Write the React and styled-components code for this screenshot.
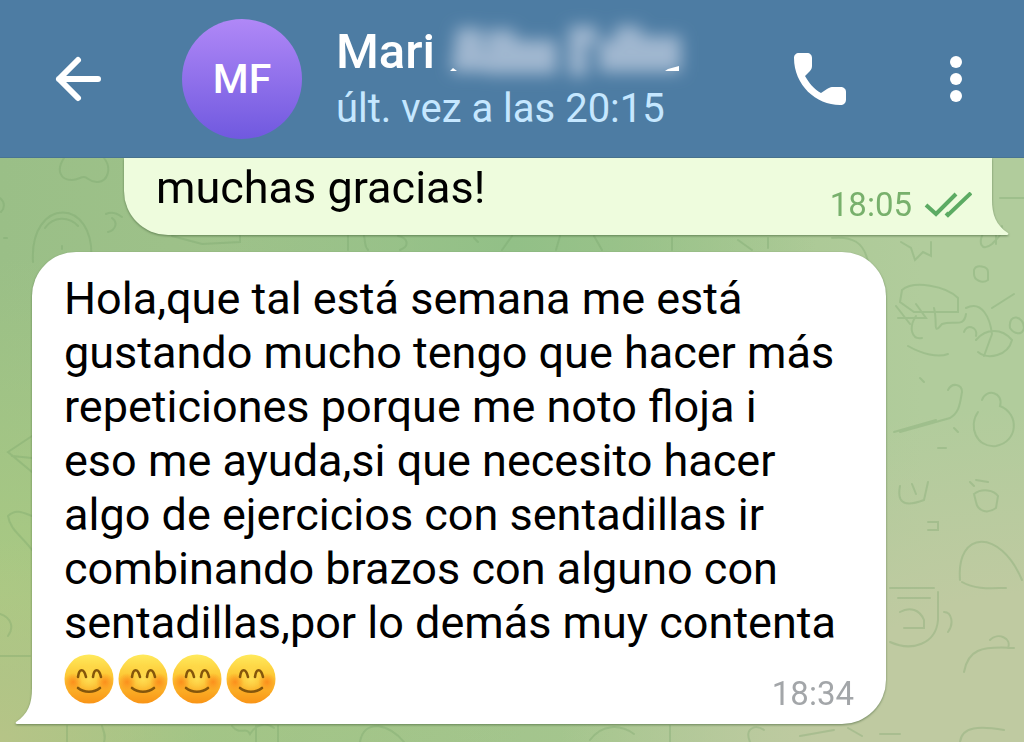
import React from 'react';
import styled, { createGlobalStyle } from 'styled-components';

const GlobalStyle = createGlobalStyle`
  *, *::before, *::after {
    box-sizing: border-box;
  }

  body {
    margin: 0;
    background-color: #aecb99;
    font-family: Roboto, 'Liberation Sans', sans-serif;
  }
`;

const Screen = styled.div`
  position: relative;
  display: flex;
  flex-direction: column;
  min-height: 100vh;
  overflow: hidden;
`;

const Wallpaper = styled.div`
  position: absolute;
  inset: 0;
  z-index: -1;
  background:
    radial-gradient(circle at 0% 100%, #b6c487 0, #b6c48700 16%),
    radial-gradient(ellipse at 100% 100%, #bfcaa1 0, #bfcaa1 14%, #bfcaa100 32%),
    radial-gradient(ellipse at 50% 33%, #92c087 0, #92c08700 42%),
    radial-gradient(ellipse at 0% 80%, #a9c983 0, #a9c98300 40%),
    linear-gradient(90deg, #9abf87, #a5c68e 60%, #b1cc9c 90%);

  svg {
    display: block;
    width: 100%;
    height: 100%;
  }
`;

const Header = styled.header`
  display: flex;
  align-items: center;
  padding: 0 36px 0 46px;
  height: 158px;
  background-color: #4d7ca3;
  border-bottom: 1px solid #487493;
`;

const IconButton = styled.button`
  display: flex;
  align-items: center;
  justify-content: center;
  flex: none;
  width: 64px;
  height: 64px;
  padding: 0;
  border: none;
  background: none;
  color: #fff;
  cursor: pointer;
`;

const Avatar = styled.div`
  display: flex;
  align-items: center;
  justify-content: center;
  flex: none;
  width: 120px;
  height: 120px;
  margin: 0 34px 0 72px;
  border-radius: 50%;
  background: linear-gradient(#b088f7, #7059df);
  color: #fff;
  font-size: 41px;
  font-weight: 500;
`;

const Contact = styled.div`
  flex: 1;
  min-width: 0;
`;

const Name = styled.h1`
  display: flex;
  align-items: center;
  gap: 8px;
  margin: 0;
  color: #fff;
  font-size: 49px;
  font-weight: 500;
  line-height: 60px;

  svg {
    overflow: visible;
  }
`;

const Status = styled.p`
  margin: 0;
  color: #c5e7ff;
  font-size: 40px;
  line-height: 54px;
  white-space: nowrap;
`;

const Actions = styled.div`
  display: flex;
  gap: 72px;
`;

const Messages = styled.main`
  display: flex;
  flex: 1;
  flex-direction: column;
  gap: 17px;
  padding: 0 32px 18px;
`;

const Bubble = styled.article`
  position: relative;
  display: flex;
  flex-direction: ${({ $outgoing }) => ($outgoing ? 'row' : 'column')};
  align-items: ${({ $outgoing }) => ($outgoing ? 'flex-end' : 'stretch')};
  justify-content: space-between;
  margin: ${({ $outgoing }) => ($outgoing ? '0 0 0 92px' : '0 106px 0 0')};
  padding: ${({ $outgoing }) => ($outgoing ? '3px 20px 12px 32px' : '20px 32px 12px')};
  border-radius: ${({ $outgoing }) => ($outgoing ? '0 0 0 44px' : '44px 44px 44px 0')};
  background-color: ${({ $outgoing }) => ($outgoing ? '#eefcdd' : '#fff')};
  filter: drop-shadow(0 1px 1px rgba(60, 90, 50, 0.6));
`;

const Tail = styled.svg`
  position: absolute;
  bottom: 0;
  ${({ $outgoing }) => ($outgoing ? 'left: 100%' : 'right: 100%')};
  width: 17px;
  height: 36px;
  fill: ${({ $outgoing }) => ($outgoing ? '#eefcdd' : '#fff')};
`;

const Text = styled.p`
  margin: 0;
  padding-bottom: ${({ $outgoing }) => ($outgoing ? '8px' : '0')};
  color: #000;
  font-size: 45px;
  line-height: 54px;
  white-space: nowrap;
`;

const Line = styled.span`
  display: block;
`;

const BubbleFooter = styled.div`
  display: flex;
  align-items: flex-end;
  justify-content: space-between;
  height: 62px;
`;

const Emojis = styled.div`
  display: flex;
  align-self: flex-start;
  gap: 4px;
  padding-top: 4px;
`;

const Meta = styled.div`
  display: flex;
  align-items: center;
  gap: 12px;
  color: ${({ $outgoing }) => ($outgoing ? '#78b06c' : '#a3a6a9')};
  font-size: 33px;
  line-height: 36px;
`;

const lines = [
  'Hola,que tal está semana me está',
  'gustando mucho tengo que hacer más',
  'repeticiones porque me noto floja i',
  'eso me ayuda,si que necesito hacer',
  'algo de ejercicios con sentadillas ir',
  'combinando brazos con alguno con',
  'sentadillas,por lo demás muy contenta',
];

const BackIcon = () => (
  <svg width="48" height="48" viewBox="0 0 48 48" fill="none" stroke="currentColor" strokeWidth="6" strokeLinecap="round" strokeLinejoin="round" aria-hidden="true">
    <path d="M44 24H5M24 5 5 24l19 19" />
  </svg>
);

const PhoneIcon = () => (
  <svg width="52" height="52" viewBox="0 0 52 52" fill="currentColor" aria-hidden="true">
    <path d="M5 0h8c3 0 5 2 5 5v8c0 2-1 4-2 5l-5 5c4 7 9 13 16 17l6-4c2-1 3-2 5-2h8c4 0 6 2 6 5v7c0 4-2 6-6 6C22 52 0 32 0 5c0-3 2-5 5-5z" />
  </svg>
);

const MenuIcon = () => (
  <svg width="14" height="48" viewBox="0 0 14 48" fill="currentColor" aria-hidden="true">
    <circle cx="7" cy="7" r="6" />
    <circle cx="7" cy="24" r="6" />
    <circle cx="7" cy="41" r="6" />
  </svg>
);

const ReadIcon = () => (
  <svg width="48" height="26" viewBox="0 0 48 26" fill="none" stroke="#5cab63" strokeWidth="4" role="img" aria-label="Leído">
    <path d="M2 13l10 9L32 2M22 21l2 2L47 1" />
  </svg>
);

const HiddenName = () => (
  <svg width="244" height="60" viewBox="0 0 244 60" aria-hidden="true">
    <defs>
      <filter id="smear" x="-20%" y="-60%" width="140%" height="220%">
        <feGaussianBlur stdDeviation="8" />
      </filter>
    </defs>
    <g fill="#c3d0e2" fillOpacity="0.7" filter="url(#smear)">
      <path d="M8 50 14 6h24l8 44z" />
      <path d="M44 8h28v10h42v34H44z" />
      <path d="M126 4h28v18h-10v32h-18z" />
      <path d="M156 18h16V4h26v10h40v36h-82z" />
    </g>
    <path d="M7 49l3-3 4 3zM222 49l3-2 11-3v5z" fill="#fff" />
  </svg>
);

const SmileEmoji = () => (
  <svg width="50" height="50" viewBox="0 0 50 50" role="img" aria-label="cara sonriente">
    <defs>
      <linearGradient id="face" x1="0" y1="0" x2="0" y2="1">
        <stop offset="0" stopColor="#ffea5c" />
        <stop offset="0.4" stopColor="#fdcb38" />
        <stop offset="1" stopColor="#f99416" />
      </linearGradient>
      <radialGradient id="cheek">
        <stop offset="0" stopColor="#fb8418" stopOpacity="0.8" />
        <stop offset="1" stopColor="#fb8418" stopOpacity="0" />
      </radialGradient>
      <radialGradient id="glow">
        <stop offset="0" stopColor="#ffe257" stopOpacity="0.9" />
        <stop offset="1" stopColor="#ffe257" stopOpacity="0" />
      </radialGradient>
    </defs>
    <circle cx="25" cy="25" r="24.5" fill="url(#face)" />
    <ellipse cx="25" cy="25" rx="14" ry="14" fill="url(#glow)" />
    <circle cx="9" cy="28" r="9" fill="url(#cheek)" />
    <circle cx="41" cy="28" r="9" fill="url(#cheek)" />
    <g fill="none" stroke="#84560c" strokeWidth="2.6" strokeLinecap="round" strokeLinejoin="round">
      <path d="M14 23c1-9 6-9 8 0M29 23c1-9 6-9 8 0" />
      <path d="M14 34c6 5 16 5 22 0" />
    </g>
  </svg>
);

const Doodles = () => (
  <svg viewBox="0 0 1024 742" preserveAspectRatio="xMidYMin slice" fill="none" stroke="#6f9e66" strokeOpacity="0.28" strokeWidth="2" strokeLinecap="round" aria-hidden="true">
    <path d="M64 158c-8 12-4 22 8 22 6 0 8-3 12-3s6 6 14 5c10-1 14-14 6-24M33 262c-4-66 64-66 58 0M45 228c8-12 24-12 33-2M106 214c6-3 12 0 16 3M108 232c8-2 10-10 4-14M0 198c5 4 5 10 1 14M4 238h3M62 246v3M172 236l30 8 38-2v-6" />
    <path d="M348 250v-14M364 236c2 8 0 10 4 14M398 236c10 2 12 10 2 14M474 238l4 4M502 250l10-14M556 250l4-14M594 236l8 14M672 238v12M738 240l14 10M768 238v10M832 238c20-2 32 4 36 24" />
    <path d="M32 436 8 452l24 20M12 456l20 2M8 516c8-8 16-3 24 0M8 516c2 14 14 20 24 34M0 614c12 4 14 14 8 22M0 656h30" />
    <path d="M67 742v-16M102 726c2 6 4 10 2 16M232 726c8 10 14 0 18 8 6-10 16-12 24-6M256 726v16M278 726v16M360 742c4-24 30-18 44 0M590 740c12-16 30-16 44-6M670 726v16M750 742c-6-14 6-18 14-12M800 736l34-6M848 728l14 8" />
    <path d="M984 158c-10 6 0 8 0 16M986 228c-10 16-4 24 6 16 8-8 10-10 10-18M996 228v16M901 242l10 6 4 12 8-8 8 4v-14M1000 198h24M974 270c2-6 14-4 14 2v8c-6 4-14 0-14-6z" />
    <path d="M902 290c12-10 44-4 56 8v14h-44l-14-10zM898 318h28l-10-14M896 306l14 18M916 316c-8 12-4 24 6 22M934 308c4 16-2 28 8 16 12-4 22 4 24-10M966 308c16-8 24 10 26 26l-8 22M964 332c2-8 14-6 12 4M908 346c14 8 30 12 40 8M976 340c10-12 26-12 36 0-4 16-24 20-34 12M992 308l22-14M1010 328c-2-16 14-12 14 0-2 8-10 6-14 0z" />
    <path d="M948 390c4-8 14-6 14 2-2 10-2 20-12 26l-50 14M894 432l42-12M982 400c4-12 22-8 18 6 20 8 18 36-4 40-20 2-28-20-18-34M920 378l4 4M954 428l4 4M938 448h8" />
    <path d="M900 486c-4 20 8 20 24 14l4-18M912 484l4 10M970 482l4 4M976 480l12 2M974 494c8-6 20-4 24 2l-2 12c-8 6-18 4-20-6zM928 522h10v8h-10M960 580c-4-50 40-52 62 0M962 582c14 8 30 6 44 6M890 588h44M898 598h32M900 612c10-6 20-2 24 8v8h-20M890 642c22 10 46 2 48-22v-28M944 612c8 0 10 12 4 20M964 672c4-22 16-26 50-24M990 640c8-8 22-2 18 8M880 734h20M960 742c2-16 20-16 44-12" />
  </svg>
);

const App = () => (
  <>
    <GlobalStyle />
    <Screen>
      <Wallpaper>
        <Doodles />
      </Wallpaper>
      <Header>
        <IconButton type="button" aria-label="Volver">
          <BackIcon />
        </IconButton>
        <Avatar>MF</Avatar>
        <Contact>
          <Name>
            Mari
            <HiddenName />
          </Name>
          <Status>últ. vez a las 20:15</Status>
        </Contact>
        <Actions>
          <IconButton type="button" aria-label="Llamar">
            <PhoneIcon />
          </IconButton>
          <IconButton type="button" aria-label="Más opciones">
            <MenuIcon />
          </IconButton>
        </Actions>
      </Header>
      <Messages>
        <Bubble $outgoing>
          <Text $outgoing>muchas gracias!</Text>
          <Meta $outgoing>
            <time>18:05</time>
            <ReadIcon />
          </Meta>
          <Tail $outgoing viewBox="0 0 17 36" aria-hidden="true">
            <path d="M0 0c0 16 4 26 16 34 1 1 0 2-1 2H0z" />
          </Tail>
        </Bubble>
        <Bubble>
          <Text>
            {lines.map((line) => (
              <Line key={line}>{line}</Line>
            ))}
          </Text>
          <BubbleFooter>
            <Emojis>
              <SmileEmoji />
              <SmileEmoji />
              <SmileEmoji />
              <SmileEmoji />
            </Emojis>
            <Meta>
              <time>18:34</time>
            </Meta>
          </BubbleFooter>
          <Tail viewBox="0 0 17 36" aria-hidden="true">
            <path d="M17 0c0 16-4 26-16 34-1 1 0 2 1 2h15z" />
          </Tail>
        </Bubble>
      </Messages>
    </Screen>
  </>
);

export default App;
